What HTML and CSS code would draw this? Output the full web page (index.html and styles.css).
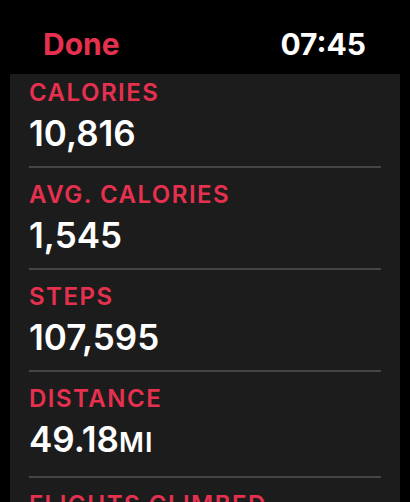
FILE: index.html
```html
<!DOCTYPE html>
<html>
<head>
  <title>Activity Totals</title>
  <link rel="stylesheet" href="styles.css">
</head>
<body>
  <div class="topbar">
    <span class="done">Done</span>
    <span class="clock">07:45</span>
  </div>
  <div class="panel">
    <div class="list">
      <div class="row">
        <div class="label">CALORIES</div>
        <div class="value">10,816</div>
      </div>
      <div class="row">
        <div class="label">AVG. CALORIES</div>
        <div class="value">1,545</div>
      </div>
      <div class="row">
        <div class="label">STEPS</div>
        <div class="value">107,595</div>
      </div>
      <div class="row">
        <div class="label">DISTANCE</div>
        <div class="value">49.18<span class="unit">MI</span></div>
      </div>
      <div class="row">
        <div class="label">FLIGHTS CLIMBED</div>
        <div class="value">312</div>
      </div>
    </div>
  </div>
</body>
</html>
```

FILE: styles.css
```css
body {
  margin: 0;
  background-color: #000;
  font-family: Inter, "Noto Sans", sans-serif;
  color: #fff;
  height: 502px;
  overflow: hidden;
}

.topbar {
  display: flex;
  justify-content: space-between;
  padding: 26px 44px 12px 43px;
  font-size: 30px;
  line-height: 36px;
  font-weight: 700;
}
.done {
  color: #e5314f;
}
.clock {
  color: #fff;
}

.panel {
  margin: 0 10px;
  background-color: #1c1c1c;
  height: 428px;
  overflow: hidden;
}
.list {
  margin-top: -8px;
}
.row {
  margin: 0 19px;
  padding: 13px 0 13px 0;
  border-bottom: 2px solid #454545;
}
.label {
  color: #e5314f;
  font-size: 24px;
  line-height: 28px;
  font-weight: 600;
  letter-spacing: 1.5px;
  margin-bottom: 6px;
}
.value {
  font-size: 35px;
  line-height: 40px;
  font-weight: 600;
}
.unit {
  font-size: 27px;
  letter-spacing: 1px;
}
```
